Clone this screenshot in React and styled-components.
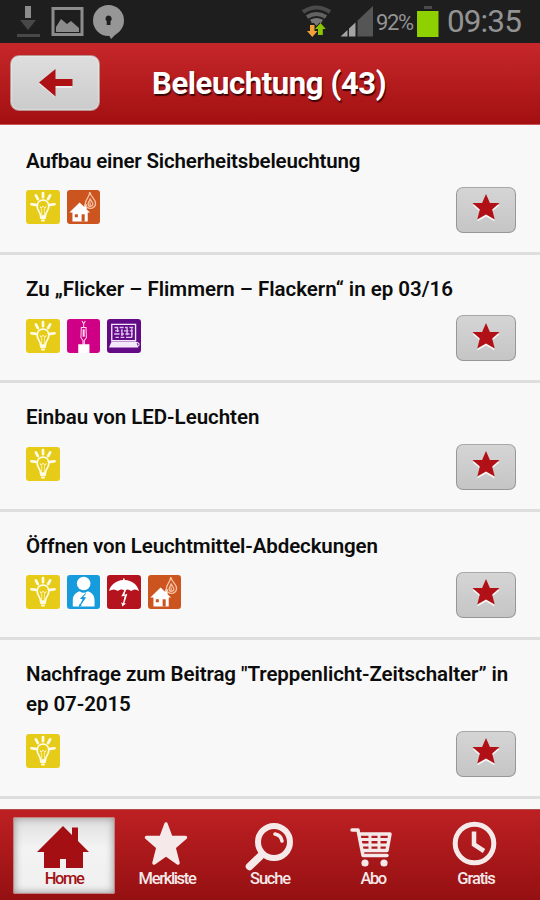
import React from 'react';
import styled, { createGlobalStyle } from 'styled-components';

const GlobalStyle = createGlobalStyle`
  * { box-sizing: border-box; }
  body { margin: 0; background: #f8f8f8; font-family: Roboto, "Liberation Sans", sans-serif; }
  svg { display: block; flex: none; overflow: visible; }
`;

const Screen = styled.div`
  width: 540px;
  height: 900px;
  display: flex;
  flex-direction: column;
  overflow: hidden;
  background: #f8f8f8;
`;

const StatusBar = styled.div`
  flex: none;
  height: 43px;
  display: flex;
  justify-content: space-between;
  background: #1e1e1e;
  color: #939393;
`;

const StatusGroup = styled.div`
  display: flex;
  height: 43px;
`;

const Percent = styled.span`
  width: 41px;
  font-size: 22px;
  line-height: 46px;
  letter-spacing: -1.4px;
  white-space: nowrap;
`;

const Time = styled.span`
  width: 93px;
  font-size: 31.5px;
  line-height: 43px;
  letter-spacing: -0.9px;
  white-space: nowrap;
`;

const Header = styled.header`
  flex: none;
  height: 82px;
  display: grid;
  grid-template-columns: 100px 1fr 102px;
  align-items: center;
  padding: 0 0 1px 10px;
  background: linear-gradient(#c6272a, #a31011);
  border-bottom: 1px solid #c95355;
`;

const BackButton = styled.button`
  width: 90px;
  height: 56px;
  padding: 0 0 1px 1px;
  display: flex;
  align-items: center;
  justify-content: center;
  border: 1px solid #b9918f;
  border-radius: 9px;
  background: linear-gradient(#dedede, #cbcbcb);
  box-shadow: inset 0 0 2px #fff;
`;

const Title = styled.h1`
  margin: 2px 0 0;
  padding-left: 42px;
  font-size: 31px;
  font-weight: 700;
  line-height: 40px;
  letter-spacing: -0.38px;
  color: #fff;
  text-shadow: 1px 2px 1px #3c0505;
  white-space: nowrap;
`;

const List = styled.main`
  flex: 1;
  min-height: 0;
  overflow: hidden;
`;

const Row = styled.article`
  height: ${(p) => (p.$tall ? 158.6 : 128.35)}px;
  padding: 19px 24px 0 26px;
  border-bottom: 3px solid #dedede;
  &:first-child { height: 130px; padding-top: 20.5px; }
`;

const RowTitle = styled.h2`
  margin: 0;
  font-size: 20.5px;
  font-weight: 600;
  line-height: 30.3px;
  letter-spacing: ${(p) => p.$spacing}px;
  color: #0c0c0c;
  white-space: nowrap;
`;

const RowBody = styled.div`
  display: flex;
  justify-content: space-between;
  padding-top: 14.5px;
`;

const Tags = styled.div`
  display: flex;
  gap: 7px;
`;

const Tile = styled.span`
  width: 33.6px;
  height: 34px;
  border-radius: 3px;
  overflow: hidden;
  background: ${(p) => p.$color};
`;

const StarButton = styled.button`
  width: 60px;
  height: 46px;
  margin: -3.500px 0 0;
  padding: 0 0 2px 0;
  display: flex;
  align-items: center;
  justify-content: center;
  border: 1px solid #979797;
  border-top-color: #a8a8a8;
  border-radius: 7px;
  background: linear-gradient(#d5d5d5, #c5c5c5);
`;

const TabBar = styled.nav`
  flex: none;
  height: 91px;
  display: flex;
  align-items: flex-start;
  padding: 7px 13px 0;
  gap: 1px;
  background: linear-gradient(#bd2023, #951012);
  border-top: 1px solid #b34a4c;
`;

const Tab = styled.a`
  width: 102px;
  height: 77px;
  padding-top: 4px;
  display: flex;
  flex-direction: column;
  align-items: center;
  border-radius: 3px;
  color: ${(p) => (p.$active ? '#a31215' : '#f5e9e9')};
  background: ${(p) => (p.$active ? 'linear-gradient(#dedede, #f3f3f3 40%, #efefef)' : 'none')};
  box-shadow: ${(p) => (p.$active ? 'inset 0 0 0 1px #c58281, inset 0 0 7px 2px #a2a2a2' : 'none')};
`;

const TabLabel = styled.span`
  margin-top: 3px;
  font-size: 16.5px;
  font-weight: 500;
  line-height: 18px;
  letter-spacing: ${(p) => p.$spacing}px;
`;

const Bulb = () => (
  <svg width="34" height="34" viewBox="0 0 100 100" fill="none" stroke="#fffde8" strokeLinecap="round">
    <path strokeWidth="8" d="M50 9v12M29 16l6 11M71 16l-6 11M16 42l13 2M84 42l-13 2" />
    <path strokeWidth="5" d="M43 77c0-12-10-15-10-29 0-11 7-18 17-18s17 7 17 18c0 14-10 17-10 29z" />
    <path strokeWidth="2" d="M46 74V56l-5-7 6 3 3-5 3 5 6-3-5 7v18" />
    <path strokeWidth="6" d="M44 82h12M47 90h6" />
  </svg>
);

const House = () => (
  <svg width="34" height="34" viewBox="0 0 100 100">
    <path fill="#fff" d="M7 66l30-29 14 13v-8h7v15l10 9H61v27H16V66z" />
    <path fill="#c9541f" d="M23 71h9v9h-9zM43 71h9v22h-9z" />
    <path fill="none" stroke="#f7c1a1" strokeWidth="4" d="M67 6c-1 17-13 20-13 34 0 9 7 14 15 14s15-6 15-14C84 25 71 23 67 6zM68 25c0 9-7 9-6 18 1 7 13 6 14-1 1-6-6-7-8-17zM68 37v8" />
  </svg>
);

const Tester = () => (
  <svg width="34" height="34" viewBox="0 0 100 100">
    <path fill="none" stroke="#ffd7ed" strokeWidth="3" d="M44 6l5 8 5-8M49 12v12M42 25h14l1 30-6 8v11h-4V63l-6-8z" />
    <path fill="#ffd7ed" d="M46 30h6v22h-6z" />
    <path fill="#fff" d="M33 74h33v26H33z" />
  </svg>
);

const Laptop = () => (
  <svg width="34" height="34" viewBox="0 0 100 100">
    <path fill="none" stroke="#f4e9fa" strokeWidth="4" d="M14 16h70v48H14z" />
    <path fill="none" stroke="#dfc4ee" strokeWidth="4" d="M22 25h11m4 0h12m4 0h8m5 0h11M24 35h12m5 0h5m4 0h13m4 0h9M21 44h16m4 0h9m4 0h12m4 0h6M25 54h10m5 0h11m5 0h18M31 25v13m13-8v20m15-23v21m14-20v26" />
    <path fill="#f4e9fa" d="M13 67h73l6 17H6z" />
    <path fill="none" stroke="#f4e9fa" strokeWidth="3" d="M84 69c8-1 14 5 8 10l-4 3" />
  </svg>
);

const Person = () => (
  <svg width="34" height="34" viewBox="0 0 100 100">
    <circle cx="49" cy="25" r="20" fill="#fff" />
    <path fill="#fff" d="M17 93V74c0-14 10-23 20-26 8 6 16 6 24 0 12 3 20 13 20 26v19z" />
    <path fill="#159bdd" d="M55 53L38 70l8 1-8 16-3-1 1 8 8-5-3-1 15-22-8-1 8-10z" />
  </svg>
);

const Umbrella = () => (
  <svg width="34" height="34" viewBox="0 0 100 100">
    <path fill="#fff" d="M6 47C11 28 28 16 47 15v-5h5v5c21 1 38 14 42 32-8-6-16-6-23 0-6-5-13-6-19-1-6-5-14-4-20 1-8-6-17-6-26 0z" />
    <path fill="#fff" d="M53 41L42 63l10-2-5 22-5-3 3 13 11-9-5-1 9-28-9 3 6-17z" />
  </svg>
);

const TILES = {
  bulb: { color: '#e6cc18', Icon: Bulb },
  house: { color: '#cb541f', Icon: House },
  tester: { color: '#cf0086', Icon: Tester },
  laptop: { color: '#630b87', Icon: Laptop },
  person: { color: '#169bdc', Icon: Person },
  umbrella: { color: '#b5141f', Icon: Umbrella },
};

const STAR_PATH = 'M14 0l3.900 9H27.500l-7.300 6.600 2.500 9.900-8.700-5-8.700 5 2.500-9.900L.5 9h9.600z';

const StarIcon = () => (
  <svg width="28" height="29" viewBox="0 0 28 29">
    <path fill="#f6f6f6" transform="translate(0 2)" d={STAR_PATH} />
    <path fill="#b01016" d={STAR_PATH} />
  </svg>
);

const NotificationIcons = () => (
  <svg width="130" height="43" viewBox="0 0 130 43">
    <path fill="#8c8c8c" d="M25 6h6v12h-6z" />
    <path fill="#484848" d="M20 20h16l-8 10zM17 34h23v3H17z" />
    <path fill="none" stroke="#8c8c8c" strokeWidth="3" d="M53 8.500h29v26H53z" />
    <path fill="#8c8c8c" d="M56 27l5-8 6 5 4-3 8 7v4H56z" />
    <circle cx="108.500" cy="20.500" r="15.500" fill="#969696" />
    <path fill="#969696" d="M118 32l-7 7-2-4z" />
    <path fill="#1e1e1e" d="M108.500 15.500a3.200 3.200 0 0 1 2 5.700V25h-3.800v-3.800a3.200 3.200 0 0 1 1.800-5.700z" />
  </svg>
);

const SignalIcons = () => (
  <svg width="76" height="43" viewBox="300 0 76 43">
    <g fill="none" strokeWidth="4">
      <path stroke="#4b4b4b" d="M303 12q13.500-9 27 0" />
      <path stroke="#626262" d="M307 17q9.500-6 19 0" />
      <path stroke="#777" d="M311 21.500q5.500-3 11 0" />
    </g>
    <path fill="#777" d="M313 22h7l-3.500 4z" />
    <path fill="#f1a13a" d="M310 25h4.500v6h3l-5.200 6-5.300-6h3z" />
    <path fill="#8bc400" d="M318 35v-6h-3l5.500-6 5.300 6h-3v6z" />
    <path fill="#555" d="M357.500 20.500L373 6v30.500h-15.500z" />
    <path fill="#a4a4a4" d="M340.500 36.500l7-6.500v6.500zM349 28.500l6.500-6v14H349z" />
  </svg>
);

const BatteryIcon = () => (
  <svg width="30" height="43" viewBox="417 0 30 43">
    <path fill="#4a4a4a" d="M424 6h8v3h-8z" />
    <path fill="#8ed000" d="M417 11h21.500v26H417z" />
  </svg>
);

const BackIcon = () => (
  <svg width="36" height="30" viewBox="0 0 36 30">
    <path fill="#fff" opacity=".55" d="M1 16L17 3v10h17v7H17v9z" />
    <path fill="#ad1114" d="M1 14.500L17.500 1v10H34.500v7h-17v10.500z" />
  </svg>
);

const HomeIcon = () => (
  <svg width="52" height="46" viewBox="1 -4 52 46">
    <path fill="#a40f13" d="M26 1l9 9V2.500h6V16l11 11h-6v16H29v-9h-6v9H7V27H0z" />
  </svg>
);

const FavoriteIcon = () => (
  <svg width="46" height="46" viewBox="1 -2 46 46">
    <path fill="#f5e9e9" stroke="#f5e9e9" strokeWidth="3.500" strokeLinejoin="round" d="M23 1l5 13.500h14.500L31 24.500 35 40 23 31.500 11 40 15 24.500 3.500 14.500H18z" />
  </svg>
);

const SearchIcon = () => (
  <svg width="50" height="46" viewBox="1.500 -3.500 50 46">
    <g fill="none" stroke="#f5e9e9" strokeLinecap="round">
      <circle cx="30.500" cy="17.500" r="16" strokeWidth="6" />
      <path strokeWidth="7.500" d="M17 31.500L6 42" />
      <path strokeWidth="3.600" d="M31.500 9.500q6 1 7 7" />
    </g>
  </svg>
);

const CartIcon = () => (
  <svg width="42" height="46" viewBox="2 -3.500 42 46">
    <g fill="none" stroke="#f5e9e9" strokeWidth="3.500" strokeLinecap="round" strokeLinejoin="round">
      <path d="M2 5.500h6l5 25.500h24M9 9.500h31l-3 16.500H12" />
      <path strokeWidth="3" d="M10 15h28M12 20.500h25M20 10v16M29 10v16" />
    </g>
    <g fill="#f5e9e9"><circle cx="15" cy="38.500" r="3.600" /><circle cx="34" cy="38.500" r="3.600" /></g>
  </svg>
);

const ClockIcon = () => (
  <svg width="46" height="46" viewBox="1.500 -3.500 46 46">
    <circle cx="23" cy="19" r="19.300" fill="none" stroke="#f5e9e9" strokeWidth="5" />
    <path fill="none" stroke="#f5e9e9" strokeWidth="4.500" d="M22.500 7v13l10 6.500" />
  </svg>
);

const ITEMS = [
  { lines: ['Aufbau einer Sicherheitsbeleuchtung'], tags: ['bulb', 'house'], spacing: -0.17 },
  { lines: ['Zu „Flicker – Flimmern – Flackern“ in ep 03/16'], tags: ['bulb', 'tester', 'laptop'], spacing: -0.01 },
  { lines: ['Einbau von LED-Leuchten'], tags: ['bulb'], spacing: -0.04 },
  { lines: ['Öffnen von Leuchtmittel-Abdeckungen'], tags: ['bulb', 'person', 'umbrella', 'house'], spacing: -0.11 },
  { lines: ['Nachfrage zum Beitrag "Treppenlicht-Zeitschalter” in', 'ep 07-2015'], tags: ['bulb'], spacing: -0.07 },
];

const TABS = [
  { label: 'Home', Icon: HomeIcon, spacing: -1.4, active: true },
  { label: 'Merkliste', Icon: FavoriteIcon, spacing: -1.35 },
  { label: 'Suche', Icon: SearchIcon, spacing: -1.2 },
  { label: 'Abo', Icon: CartIcon, spacing: -1.5 },
  { label: 'Gratis', Icon: ClockIcon, spacing: -1.1 },
];

export default function App() {
  return (
    <Screen>
      <GlobalStyle />
      <StatusBar>
        <StatusGroup><NotificationIcons /></StatusGroup>
        <StatusGroup>
          <SignalIcons />
          <Percent>92%</Percent>
          <BatteryIcon />
          <Time>09:35</Time>
        </StatusGroup>
      </StatusBar>
      <Header>
        <BackButton aria-label="Zurück"><BackIcon /></BackButton>
        <Title>Beleuchtung (43)</Title>
      </Header>
      <List>
        {ITEMS.map((item) => (
          <Row key={item.lines[0]} $tall={item.lines.length > 1}>
            <RowTitle $spacing={item.spacing}>
              {item.lines.map((line) => <div key={line}>{line}</div>)}
            </RowTitle>
            <RowBody>
              <Tags>
                {item.tags.map((tag) => {
                  const { color, Icon } = TILES[tag];
                  return <Tile key={tag} $color={color}><Icon /></Tile>;
                })}
              </Tags>
              <StarButton aria-label="Merken"><StarIcon /></StarButton>
            </RowBody>
          </Row>
        ))}
      </List>
      <TabBar>
        {TABS.map(({ label, Icon, spacing, active }) => (
          <Tab key={label} $active={active}>
            <Icon />
            <TabLabel $spacing={spacing}>{label}</TabLabel>
          </Tab>
        ))}
      </TabBar>
    </Screen>
  );
}
